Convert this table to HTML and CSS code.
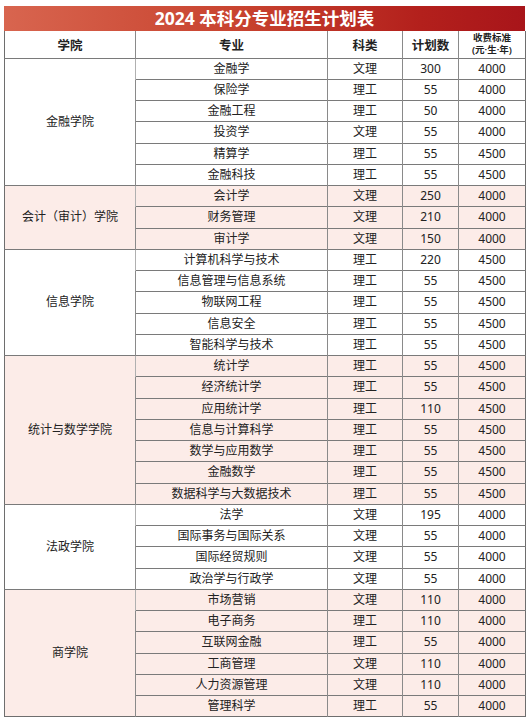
FILE: index.html
```html
<!DOCTYPE html>
<html lang="zh">
<head>
<meta charset="utf-8">
<title>2024 本科分专业招生计划表</title>
<link rel="stylesheet" href="styles.css">
</head>
<body>
<div class="sheet">
  <div class="title">2024 本科分专业招生计划表</div>
  <table class="plan">
    <colgroup>
      <col class="c-college"><col class="c-major"><col class="c-type"><col class="c-num"><col class="c-fee">
    </colgroup>
    <thead>
      <tr class="head">
        <th>学院</th><th>专业</th><th>科类</th><th>计划数</th>
        <th class="fee-h"><span>收费标准</span><span>(元·生·年)</span></th>
      </tr>
    </thead>
    <tbody class="grp">
      <tr><td class="college" rowspan="6">金融学院</td><td>金融学</td><td>文理</td><td>300</td><td>4000</td></tr>
      <tr><td>保险学</td><td>理工</td><td>55</td><td>4000</td></tr>
      <tr><td>金融工程</td><td>理工</td><td>50</td><td>4000</td></tr>
      <tr><td>投资学</td><td>文理</td><td>55</td><td>4000</td></tr>
      <tr><td>精算学</td><td>理工</td><td>55</td><td>4500</td></tr>
      <tr><td>金融科技</td><td>理工</td><td>55</td><td>4500</td></tr>
    </tbody>
    <tbody class="grp pink">
      <tr><td class="college" rowspan="3">会计（审计）学院</td><td>会计学</td><td>文理</td><td>250</td><td>4000</td></tr>
      <tr><td>财务管理</td><td>文理</td><td>210</td><td>4000</td></tr>
      <tr><td>审计学</td><td>文理</td><td>150</td><td>4000</td></tr>
    </tbody>
    <tbody class="grp">
      <tr><td class="college" rowspan="5">信息学院</td><td>计算机科学与技术</td><td>理工</td><td>220</td><td>4500</td></tr>
      <tr><td>信息管理与信息系统</td><td>理工</td><td>55</td><td>4500</td></tr>
      <tr><td>物联网工程</td><td>理工</td><td>55</td><td>4500</td></tr>
      <tr><td>信息安全</td><td>理工</td><td>55</td><td>4500</td></tr>
      <tr><td>智能科学与技术</td><td>理工</td><td>55</td><td>4500</td></tr>
    </tbody>
    <tbody class="grp pink">
      <tr><td class="college" rowspan="7">统计与数学学院</td><td>统计学</td><td>理工</td><td>55</td><td>4500</td></tr>
      <tr><td>经济统计学</td><td>理工</td><td>55</td><td>4500</td></tr>
      <tr><td>应用统计学</td><td>理工</td><td>110</td><td>4500</td></tr>
      <tr><td>信息与计算科学</td><td>理工</td><td>55</td><td>4500</td></tr>
      <tr><td>数学与应用数学</td><td>理工</td><td>55</td><td>4500</td></tr>
      <tr><td>金融数学</td><td>理工</td><td>55</td><td>4500</td></tr>
      <tr><td>数据科学与大数据技术</td><td>理工</td><td>55</td><td>4500</td></tr>
    </tbody>
    <tbody class="grp">
      <tr><td class="college" rowspan="4">法政学院</td><td>法学</td><td>文理</td><td>195</td><td>4000</td></tr>
      <tr><td>国际事务与国际关系</td><td>文理</td><td>55</td><td>4000</td></tr>
      <tr><td>国际经贸规则</td><td>文理</td><td>55</td><td>4000</td></tr>
      <tr><td>政治学与行政学</td><td>文理</td><td>55</td><td>4000</td></tr>
    </tbody>
    <tbody class="grp pink">
      <tr><td class="college" rowspan="6">商学院</td><td>市场营销</td><td>文理</td><td>110</td><td>4000</td></tr>
      <tr><td>电子商务</td><td>理工</td><td>110</td><td>4000</td></tr>
      <tr><td>互联网金融</td><td>理工</td><td>55</td><td>4000</td></tr>
      <tr><td>工商管理</td><td>文理</td><td>110</td><td>4000</td></tr>
      <tr><td>人力资源管理</td><td>文理</td><td>110</td><td>4000</td></tr>
      <tr><td>管理科学</td><td>理工</td><td>55</td><td>4000</td></tr>
    </tbody>
  </table>
</div>
</body>
</html>
```

FILE: styles.css
```css
* { box-sizing: border-box; }
html, body { margin: 0; padding: 0; background: #ffffff; }
body {
  font-family: "Noto Sans", "Noto Sans CJK SC", sans-serif;
  color: #222;
}
.sheet {
  width: 529px;
  padding: 6px 4px 0 4px;
}
.title {
  height: 25px;
  line-height: 25px;
  text-align: center;
  color: #fff;
  font-weight: 700;
  font-size: 17.5px;
  background: linear-gradient(90deg, #d8654f 0%, #c8432f 45%, #b3201c 80%, #a8151a 100%);
}
.plan {
  width: 521px;
  table-layout: fixed;
  border-collapse: collapse;
  border: 1px solid #6e6e6e;
  border-top: none;
  font-size: 12px;
}
.c-college { width: 131px; }
.c-major { width: 192px; }
.c-type { width: 75px; }
.c-num { width: 56px; }
.c-fee { width: 67px; }
.plan th, .plan td {
  padding: 0;
  text-align: center;
  vertical-align: middle;
  border-left: 1px solid #8a8a8a;
  border-top: 1px solid #7a7a7a;
  white-space: nowrap;
}
.plan td { height: 21.26px; line-height: 20px; }
.plan th {
  height: 27px;
  font-weight: 600;
  font-size: 12.5px;
  border-top: none;
}
.fee-h span {
  display: block;
  font-size: 9.5px;
  line-height: 12px;
  font-weight: 600;
}
.plan td.college { border-left: none; }
.plan th:first-child { border-left: none; }
.plan td.college + td { border-left: 1px solid #b0b0b0; }
.pink td { background: #fcece8; }
```
